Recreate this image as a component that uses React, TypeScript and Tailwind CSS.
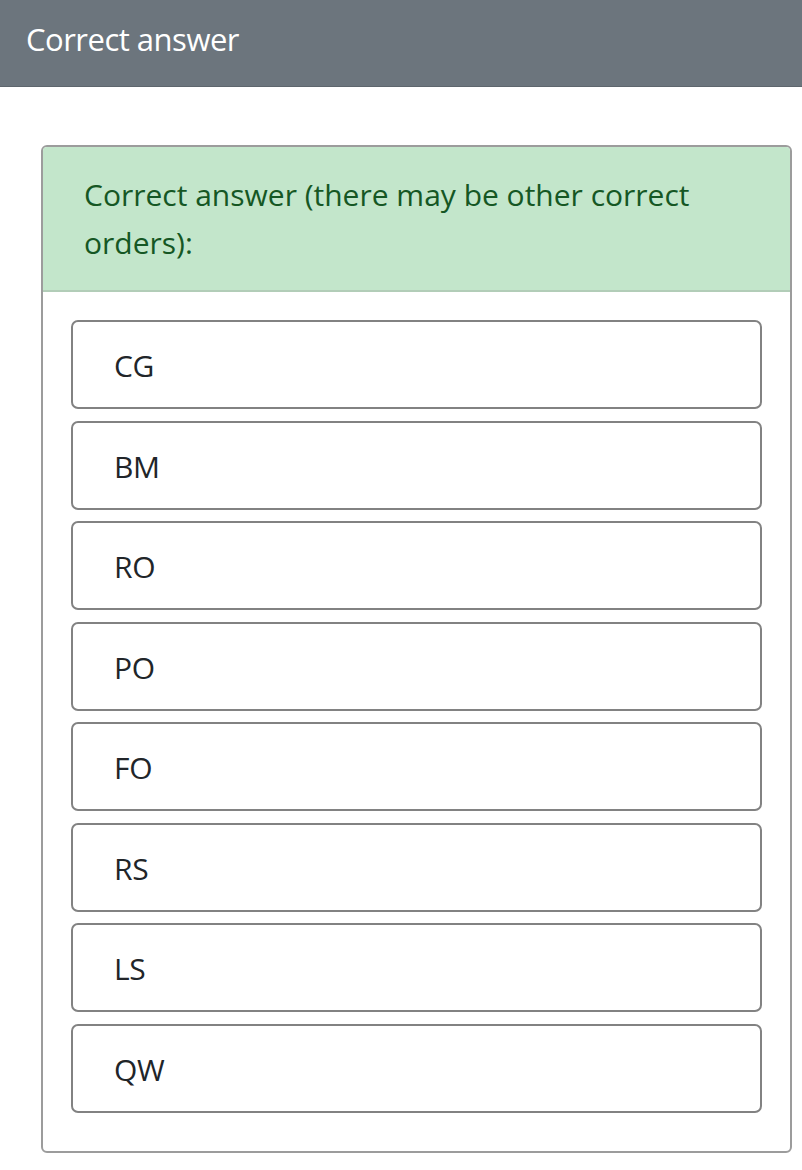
const order = ['CG', 'BM', 'RO', 'PO', 'FO', 'RS', 'LS', 'QW'];

export default function App() {
  return (
    <div className="min-h-screen bg-white" style={{ fontFamily: '"Open Sans", "Noto Sans", sans-serif' }}>
      <header className="h-[87px] bg-[#6c757d] border-b border-[#5e666d] flex items-center px-[26px]">
        <h1 className="text-[31px] text-white tracking-[-0.5px] leading-none -mt-[7px]">Correct answer</h1>
      </header>

      <div className="ml-[41px] mr-[10px] mt-[58px] border-2 border-[#9c9c9c] rounded-[6px] overflow-hidden">
        <div className="bg-[#c3e6cb] border-b-2 border-[#b2cdb8] px-[41px] pt-[24px] pb-[23px]">
          <p className="text-[30px] leading-[48px] text-[#155724]">
            Correct answer (there may be other correct orders):
          </p>
        </div>

        <div className="px-[28px] pt-[28px] pb-[38px] flex flex-col gap-[11.5px]">
          {order.map((item) => (
            <div
              key={item}
              className="h-[89px] border-2 border-[#828282] rounded-[7px] flex items-center pl-[41px]"
            >
              <span className="text-[30px] text-[#212529] tracking-[-0.3px] mt-[2px]">{item}</span>
            </div>
          ))}
        </div>
      </div>
    </div>
  );
}
